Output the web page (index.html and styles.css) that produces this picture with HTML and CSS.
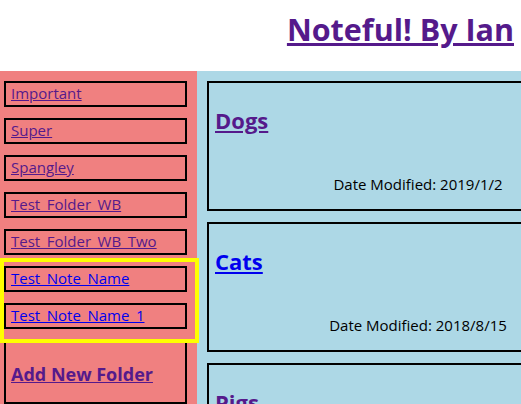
FILE: index.html
```html
<!DOCTYPE html>
<html>
<head>
<meta charset="utf-8">
<link rel="stylesheet" href="styles.css">
</head>
<body>
<header class="header">
  <h1 class="title"><a href="#" class="visited">Noteful! By Ian</a></h1>
</header>
<div class="app">
  <nav class="sidebar">
    <ul class="folders">
      <li class="item"><a href="#" class="visited">Important</a></li>
      <li class="item"><a href="#" class="visited">Super</a></li>
      <li class="item"><a href="#" class="visited">Spangley</a></li>
      <li class="item"><a href="#" class="visited">Test_Folder_WB</a></li>
      <li class="item"><a href="#" class="visited">Test_Folder_WB_Two</a></li>
    </ul>
    <ul class="notes-group">
      <li class="item"><a href="#" class="link">Test_Note_Name</a></li>
      <li class="item"><a href="#" class="link">Test_Note_Name_1</a></li>
    </ul>
    <div class="add-box">
      <h3 class="add-title"><a href="#" class="visited">Add New Folder</a></h3>
    </div>
  </nav>
  <main class="main">
    <section class="card">
      <h2 class="card-title"><a href="#" class="visited">Dogs</a></h2>
      <p class="card-date">Date Modified: 2019/1/2</p>
    </section>
    <section class="card">
      <h2 class="card-title"><a href="#" class="link">Cats</a></h2>
      <p class="card-date">Date Modified: 2018/8/15</p>
    </section>
    <section class="card">
      <h2 class="card-title"><a href="#" class="visited">Pigs</a></h2>
      <p class="card-date">Date Modified: 2018/3/5</p>
    </section>
  </main>
</div>
</body>
</html>
```
FILE: styles.css
```css
html, body {
  margin: 0;
  padding: 0;
  overflow: hidden;
}
body {
  font-family: "Open Sans", "Noto Sans", sans-serif;
  font-size: 15px;
  background: #fff;
  width: 521px;
  height: 404px;
}
.visited { color: #551A8B; }
.link { color: #0000EE; }

.header {
  height: 71px;
  display: flex;
  justify-content: flex-end;
  align-items: flex-start;
}
.title {
  margin: 8px 7px 0 0;
  font-size: 30.5px;
  line-height: 42px;
  font-weight: 700;
}

.app {
  display: flex;
  align-items: stretch;
  height: 333px;
}

.sidebar {
  width: 197px;
  flex: 0 0 197px;
  background: #F08080;
  padding: 10px 0 0 4px;
  box-sizing: border-box;
  display: flex;
  flex-direction: column;
}
.folders, .notes-group {
  list-style: none;
  margin: 0;
  padding: 0;
  display: flex;
  flex-direction: column;
  gap: 11px;
}
.folders { margin-bottom: 7px; }
.notes-group {
  width: 191px;
  padding: 4px 0 10px;
  outline: 4px solid #FFFF00;
  position: relative;
  z-index: 1;
}
.item {
  width: 183px;
  height: 26px;
  box-sizing: border-box;
  border: 2px solid #000;
  padding: 0 5px;
  line-height: 21px;
  white-space: nowrap;
}
.add-box {
  width: 183px;
  flex: 1;
  box-sizing: border-box;
  border: 2px solid #000;
  padding: 0 5px;
}
.add-title {
  margin: 21px 0 0;
  font-size: 18px;
  line-height: 24px;
  font-weight: 700;
}

.main {
  flex: 1;
  background: #ADD8E6;
  padding: 10px 0 0 10px;
  display: flex;
  flex-direction: column;
  gap: 11px;
  overflow: hidden;
  min-width: 0;
}
.card {
  flex: 0 0 auto;
  width: 422px;
  height: 130px;
  box-sizing: border-box;
  border: 2px solid #000;
  padding: 0 6px;
}
.card-title {
  margin: 22px 0 0;
  font-size: 22px;
  line-height: 30px;
  font-weight: 700;
}
.card-date {
  margin: 39px 0 0;
  text-align: center;
  font-size: 15px;
  line-height: 20px;
  color: #000;
}
```
